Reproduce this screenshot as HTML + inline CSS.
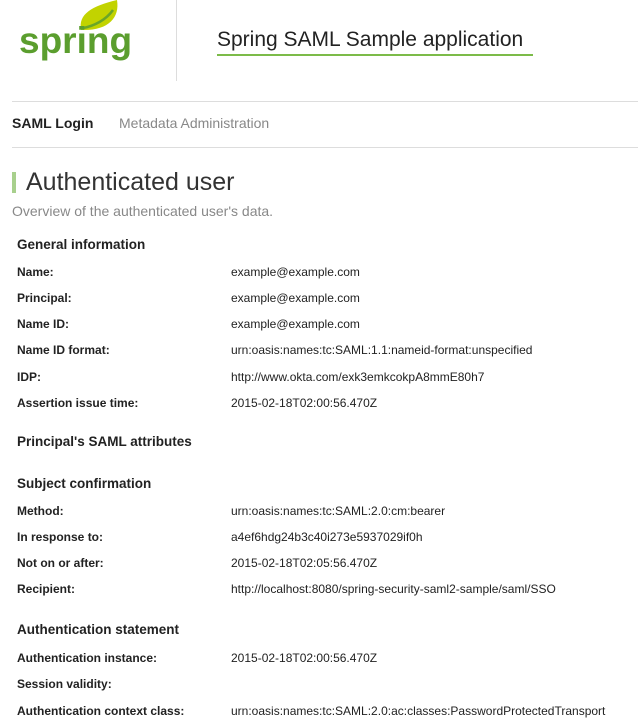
<!DOCTYPE html>
<html><head><meta charset="utf-8"><style>
body{margin:0;width:638px;height:709px;overflow:hidden;background:#fff;font-family:"Liberation Sans",Arial,sans-serif;color:#222;position:relative}
.a{position:absolute;white-space:nowrap}
.l{position:absolute;left:17px;font-size:12px;font-weight:bold;line-height:14px}
.v{position:absolute;left:231px;font-size:12px;line-height:14px}
.h{position:absolute;left:17px;font-size:13.5px;font-weight:bold;line-height:16px}
</style></head><body>
<svg class="a" style="left:78px;top:0" width="42" height="32" viewBox="0 0 42 32"><path d="M3 30 C0 14 14 6 39 0 C42 18 30 31 3 30 Z" fill="#c2d300"/><path d="M5 28 C16 26 28 20 35 10" stroke="#6aa628" stroke-width="2.5" fill="none"/></svg>
<div class="a" style="left:19px;top:20px;font-size:37px;font-weight:bold;color:#5b9e2e;line-height:42px">spring</div>
<div class="a" style="left:176px;top:0;width:1px;height:81px;background:#ddd"></div>
<div class="a" style="left:217px;top:27px;font-size:21px;line-height:26px;color:#222">Spring SAML Sample application</div>
<div class="a" style="left:217px;top:54px;width:316px;height:2px;background:#7cbb49"></div>
<div class="a" style="left:12px;top:101px;width:626px;height:1px;background:#ddd"></div>
<div class="a" style="left:12px;top:115px;font-size:14px;font-weight:bold;line-height:16px">SAML Login</div>
<div class="a" style="left:119px;top:115px;font-size:14px;color:#888;line-height:16px">Metadata Administration</div>
<div class="a" style="left:12px;top:147px;width:626px;height:1px;background:#ddd"></div>
<div class="a" style="left:12px;top:172px;width:4px;height:21px;background:#a8d08d"></div>
<div class="a" style="left:26px;top:167px;font-size:25px;line-height:30px;color:#333">Authenticated user</div>
<div class="a" style="left:12px;top:203px;font-size:14px;line-height:16px;color:#888">Overview of the authenticated user's data.</div>
<div class="h" style="top:237px">General information</div>
<div class="l" style="top:265px">Name:</div><div class="v" style="top:265px">example@example.com</div>
<div class="l" style="top:291px">Principal:</div><div class="v" style="top:291px">example@example.com</div>
<div class="l" style="top:317px">Name ID:</div><div class="v" style="top:317px">example@example.com</div>
<div class="l" style="top:343px">Name ID format:</div><div class="v" style="top:343px">urn:oasis:names:tc:SAML:1.1:nameid-format:unspecified</div>
<div class="l" style="top:370px">IDP:</div><div class="v" style="top:370px">http://www.okta.com/exk3emkcokpA8mmE80h7</div>
<div class="l" style="top:396px">Assertion issue time:</div><div class="v" style="top:396px">2015-02-18T02:00:56.470Z</div>
<div class="h" style="top:434px">Principal's SAML attributes</div>
<div class="h" style="top:476px">Subject confirmation</div>
<div class="l" style="top:504px">Method:</div><div class="v" style="top:504px">urn:oasis:names:tc:SAML:2.0:cm:bearer</div>
<div class="l" style="top:530px">In response to:</div><div class="v" style="top:530px">a4ef6hdg24b3c40i273e5937029if0h</div>
<div class="l" style="top:556px">Not on or after:</div><div class="v" style="top:556px">2015-02-18T02:05:56.470Z</div>
<div class="l" style="top:582px">Recipient:</div><div class="v" style="top:582px">http://localhost:8080/spring-security-saml2-sample/saml/SSO</div>
<div class="h" style="top:622px">Authentication statement</div>
<div class="l" style="top:651px">Authentication instance:</div><div class="v" style="top:651px">2015-02-18T02:00:56.470Z</div>
<div class="l" style="top:677px">Session validity:</div>
<div class="l" style="top:704px">Authentication context class:</div><div class="v" style="top:704px">urn:oasis:names:tc:SAML:2.0:ac:classes:PasswordProtectedTransport</div>
</body></html>
